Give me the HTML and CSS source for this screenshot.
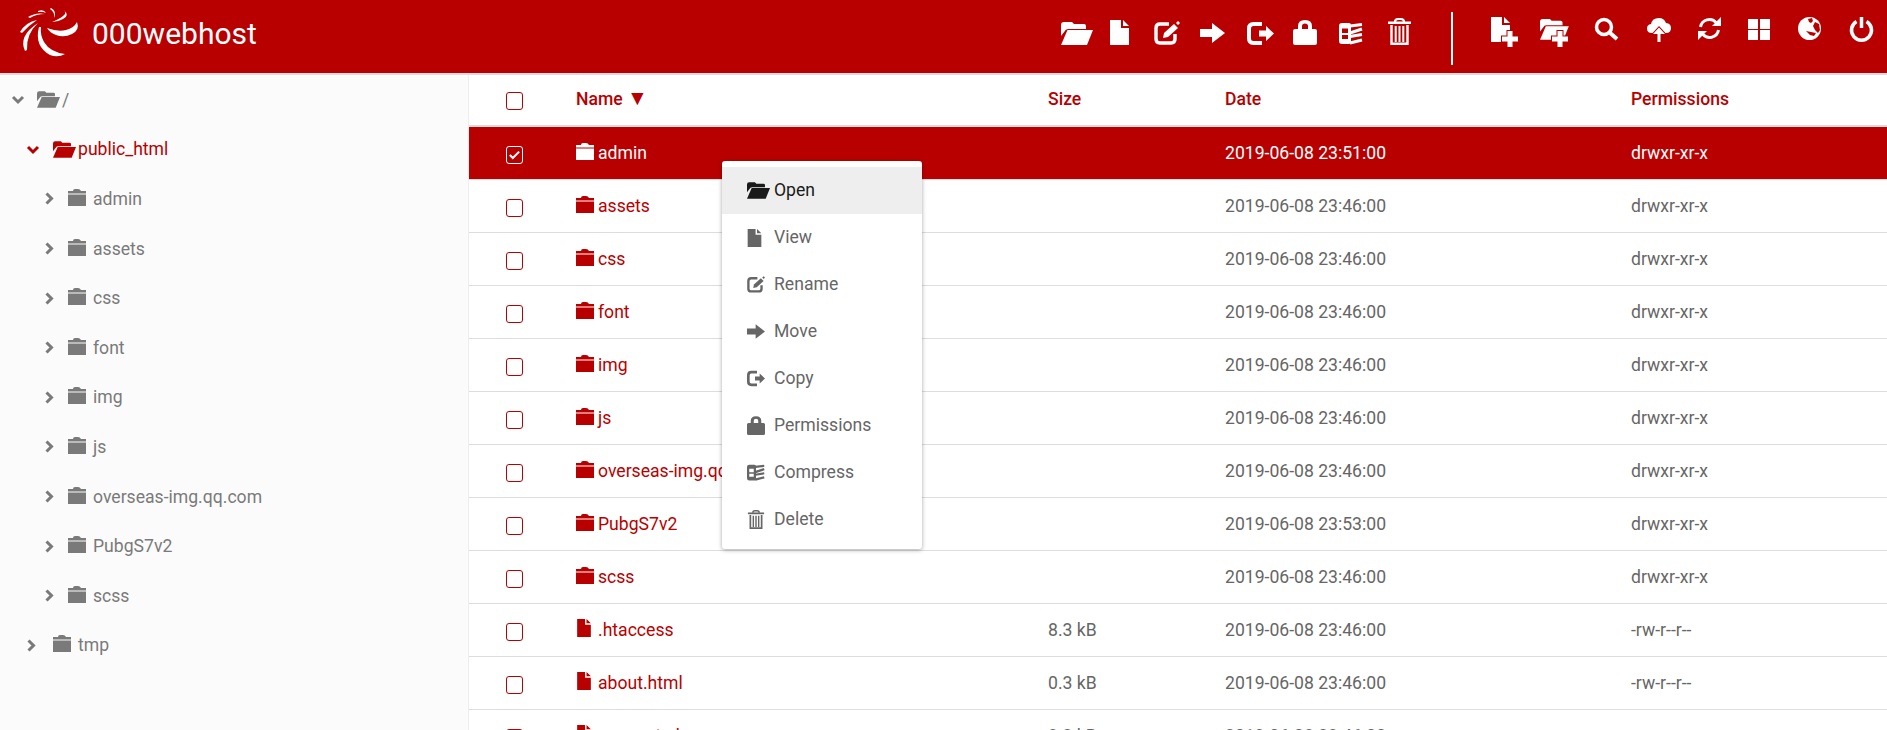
FILE: index.html
```html
<!DOCTYPE html>
<html lang="en">
<head>
<meta charset="utf-8">
<title>000webhost File Manager</title>
<link rel="stylesheet" href="styles.css">
</head>
<body>
<svg class="defs" width="0" height="0" aria-hidden="true">
  <defs>
    <g id="g-open"><path d="M0 14V3Q0 0 3 0h8l2 2h10q2 0 2 2v3H7Q4.500 7 3.500 9.500z"/><path d="M6.500 8H32L26 23H0z"/></g>
    <g id="g-file"><path d="M0 0H11V8H19V25H0z"/><path d="M13 0L19 6H13z"/></g>
    <g id="g-edit"><path class="st" stroke-width="3.400" d="M15 3H6Q2 3 2 7V18Q2 22 6 22H17Q21 22 21 18V13"/><path d="M9 17l1-5 10-9 4 4-10 9z"/><path d="M22 2l2-2 2 2-2 2z"/></g>
    <g id="g-arrow"><path d="M0 6H12V0L25 10 12 20V14H0z"/></g>
    <g id="g-copy"><path class="st" stroke-width="4" d="M15 2H6.500Q2 2 2 6.500V16.500Q2 21 6.500 21H15"/><path d="M12 8.500H19V4L27 11.500 19 19V14.500H12z"/></g>
    <g id="g-lock"><path fill-rule="evenodd" d="M2 9H5V6Q5 0 12 0 19 0 19 6V9H22Q24 9 24 11V23Q24 25 22 25H2Q0 25 0 23V11Q0 9 2 9zM9 9H15V6Q15 3.500 12 3.500 9 3.500 9 6z"/></g>
    <g id="g-zip"><path fill-rule="evenodd" d="M3 0H10Q12 0 12 2V19Q12 21 10 21H3Q0 21 0 18V3Q0 0 3 0zM3 5.500V10H9V5.500zM3 12V16H9V12z"/><path class="st" stroke-width="3" d="M11 3L23 1.500M11 10L23 6M11 13.500L23 11.500M11 20L23 17"/></g>
    <g id="g-trash"><path class="st" stroke-width="2.200" d="M7 4Q7 1 10 1H13Q16 1 16 4"/><path d="M0 3.500H23V6H0z"/><path class="st" stroke-width="2.400" d="M3.500 7V25.800H19.500V7"/><path class="st" stroke-width="2" d="M7.700 8V24M11.500 8V24M15.300 8V24"/></g>
    <g id="g-folder"><path d="M5 2Q5 0 7 0H10Q12 0 13 2H18V4.500H0V2H5z"/><path d="M0 5.500H18V17H0z"/></g>
    <g id="g-down"><path class="st" stroke-width="3" d="M1 1L6 6 11 1"/></g>
    <g id="g-right"><path class="st" stroke-width="3" d="M1.500 .5L6.500 5.500 1.500 10.500"/></g>
    <g id="g-plus"><path class="knock" d="M5.500 0h5v5.500H16v5h-5.500V16h-5v-5.500H0v-5h5.500z"/></g>
  </defs>
</svg>

<header class="topbar">
  <a class="brand">
    <svg class="brand-mark" width="58" height="50" viewBox="0 0 58 50">
      <path d="M19 19Q14 38 30 47 38 50 45 46 30 44 24 34 20 27 21 19z"/>
      <path d="M27 20Q38 24 46 22 54 20 57 14 60 22 52 26 44 30 36 27 30 25 27 20z"/>
      <path d="M5 43Q-2 28 18 15 6 26 7 42z"/>
      <path d="M0 24Q6 14 17 12 8 18 2 25z"/>
      <path d="M8 9Q16 4 25 6 16 6 10 10z"/>
      <path d="M18 3Q24 1 26 5 22 3 18 4z"/>
      <path d="M31 0Q37 3 34 10 35 4 30 1z"/>
      <path d="M44 2Q50 8 43 11 38 14 32 14 42 10 45 6 46 4 44 2z"/>
    </svg>
    <span class="brand-name">000webhost</span>
  </a>
  <nav class="tools">
    <svg width="32" height="30" viewBox="0 -5 32 30"><use href="#g-open"/></svg>
    <svg width="36" height="30" viewBox="-17 -3 36 30"><use href="#g-file"/></svg>
    <svg width="51" height="30" viewBox="-25 -4 51 30"><use href="#g-edit"/></svg>
    <svg width="45" height="30" viewBox="-20 -6 45 30"><use href="#g-arrow"/></svg>
    <svg width="49" height="30" viewBox="-22 -5 49 30"><use href="#g-copy"/></svg>
    <svg width="43" height="30" viewBox="-19 -3 43 30"><use href="#g-lock"/></svg>
    <svg width="46" height="30" viewBox="-22 -6 46 30"><use href="#g-zip"/></svg>
    <svg width="48" height="30" viewBox="-25 -1 48 30"><use href="#g-trash"/></svg>
  </nav>
  <span class="divider"></span>
  <nav class="tools">
    <svg width="27" height="30" viewBox="0 0 27 30"><use href="#g-file"/><use href="#g-plus" x="11" y="14"/></svg>
    <svg width="50" height="30" viewBox="-22 -2 50 30"><use href="#g-open" transform="scale(.9)"/><use href="#g-plus" x="12" y="12"/></svg>
    <svg width="50" height="30" viewBox="-27 -1 50 30"><circle class="st" stroke-width="3.500" cx="9" cy="9" r="7.500"/><path class="st" stroke-width="4" d="M14 14L22 21"/></svg>
    <svg width="53" height="30" viewBox="-29 -1 53 30"><path d="M5 15Q0 15 0 10.500 0 6.500 4 6 5 0 12 0 17 0 19 5 24 5.500 24 10 24 15 19 15z"/><path class="knock" stroke-width="1.500" d="M12 9.500L18 16H13.500V24H10.500V16H6z"/></svg>
    <svg width="50" height="30" viewBox="-27 0 50 30"><path class="st" stroke-width="3" d="M2.500 10A9 9 0 0 1 18 5.500"/><path d="M23 0V9H14z"/><path class="st" stroke-width="3" d="M20.500 13A9 9 0 0 1 5 17.500"/><path d="M0 23V14H9z"/></svg>
    <svg width="49" height="30" viewBox="-27 -2 49 30"><path d="M0 0H10V10H0zM12 0H22V10H12zM0 11H10V21H0zM12 11H22V21H12z"/></svg>
    <svg width="51" height="30" viewBox="-28 0 51 30"><circle cx="11.500" cy="11.500" r="11.500"/><path class="cut" d="M10 2L14 1 15 4 13 6 11 5zM17 5L21 7 22 13 20 16 17 13 15 9zM8 14L13 15 18 16 16 19 12 18z"/></svg>
    <svg width="52" height="30" viewBox="-29 0 52 30"><path class="st" stroke-width="3.500" d="M6.500 4.500A10 10 0 1 0 16.500 4.500"/><path class="st" stroke-width="3.500" d="M11.500 0V11"/></svg>
  </nav>
</header>

<div class="main">
  <aside class="tree">
    <ul class="tree-list">
      <li class="node root"><svg class="chev-d" viewBox="0 0 12 7"><use href="#g-down"/></svg><svg class="ico-open" viewBox="0 0 32 23"><use href="#g-open"/></svg><span>/</span></li>
      <li class="node lvl1 active"><svg class="chev-d" viewBox="0 0 12 7"><use href="#g-down"/></svg><svg class="ico-open" viewBox="0 0 32 23"><use href="#g-open"/></svg><span>public_html</span></li>
      <li class="node lvl2"><svg class="chev-r" viewBox="0 0 8 11"><use href="#g-right"/></svg><svg class="ico-folder" viewBox="0 0 18 17"><use href="#g-folder"/></svg><span>admin</span></li>
      <li class="node lvl2"><svg class="chev-r" viewBox="0 0 8 11"><use href="#g-right"/></svg><svg class="ico-folder" viewBox="0 0 18 17"><use href="#g-folder"/></svg><span>assets</span></li>
      <li class="node lvl2"><svg class="chev-r" viewBox="0 0 8 11"><use href="#g-right"/></svg><svg class="ico-folder" viewBox="0 0 18 17"><use href="#g-folder"/></svg><span>css</span></li>
      <li class="node lvl2"><svg class="chev-r" viewBox="0 0 8 11"><use href="#g-right"/></svg><svg class="ico-folder" viewBox="0 0 18 17"><use href="#g-folder"/></svg><span>font</span></li>
      <li class="node lvl2"><svg class="chev-r" viewBox="0 0 8 11"><use href="#g-right"/></svg><svg class="ico-folder" viewBox="0 0 18 17"><use href="#g-folder"/></svg><span>img</span></li>
      <li class="node lvl2"><svg class="chev-r" viewBox="0 0 8 11"><use href="#g-right"/></svg><svg class="ico-folder" viewBox="0 0 18 17"><use href="#g-folder"/></svg><span>js</span></li>
      <li class="node lvl2"><svg class="chev-r" viewBox="0 0 8 11"><use href="#g-right"/></svg><svg class="ico-folder" viewBox="0 0 18 17"><use href="#g-folder"/></svg><span>overseas-img.qq.com</span></li>
      <li class="node lvl2"><svg class="chev-r" viewBox="0 0 8 11"><use href="#g-right"/></svg><svg class="ico-folder" viewBox="0 0 18 17"><use href="#g-folder"/></svg><span>PubgS7v2</span></li>
      <li class="node lvl2"><svg class="chev-r" viewBox="0 0 8 11"><use href="#g-right"/></svg><svg class="ico-folder" viewBox="0 0 18 17"><use href="#g-folder"/></svg><span>scss</span></li>
      <li class="node lvl1"><svg class="chev-r" viewBox="0 0 8 11"><use href="#g-right"/></svg><svg class="ico-folder" viewBox="0 0 18 17"><use href="#g-folder"/></svg><span>tmp</span></li>
    </ul>
  </aside>

  <section class="files">
    <div class="row head">
      <div class="c-check"><span class="box"></span></div>
      <div class="c-name">Name <span class="sort">▼</span></div>
      <div class="c-size">Size</div>
      <div class="c-date">Date</div>
      <div class="c-perm">Permissions</div>
    </div>
    <div class="row selected">
      <div class="c-check"><span class="box"><svg viewBox="0 0 13 11" width="11" height="10"><path class="st" stroke-width="2.400" d="M1 5.500L4.500 9 12 1.500"/></svg></span></div>
      <div class="c-name"><svg class="ico-row" viewBox="0 0 18 17"><use href="#g-folder"/></svg>admin</div>
      <div class="c-size"></div>
      <div class="c-date">2019-06-08 23:51:00</div>
      <div class="c-perm">drwxr-xr-x</div>
    </div>
    <div class="row"><div class="c-check"><span class="box"></span></div><div class="c-name"><svg class="ico-row" viewBox="0 0 18 17"><use href="#g-folder"/></svg>assets</div><div class="c-size"></div><div class="c-date">2019-06-08 23:46:00</div><div class="c-perm">drwxr-xr-x</div></div>
    <div class="row"><div class="c-check"><span class="box"></span></div><div class="c-name"><svg class="ico-row" viewBox="0 0 18 17"><use href="#g-folder"/></svg>css</div><div class="c-size"></div><div class="c-date">2019-06-08 23:46:00</div><div class="c-perm">drwxr-xr-x</div></div>
    <div class="row"><div class="c-check"><span class="box"></span></div><div class="c-name"><svg class="ico-row" viewBox="0 0 18 17"><use href="#g-folder"/></svg>font</div><div class="c-size"></div><div class="c-date">2019-06-08 23:46:00</div><div class="c-perm">drwxr-xr-x</div></div>
    <div class="row"><div class="c-check"><span class="box"></span></div><div class="c-name"><svg class="ico-row" viewBox="0 0 18 17"><use href="#g-folder"/></svg>img</div><div class="c-size"></div><div class="c-date">2019-06-08 23:46:00</div><div class="c-perm">drwxr-xr-x</div></div>
    <div class="row"><div class="c-check"><span class="box"></span></div><div class="c-name"><svg class="ico-row" viewBox="0 0 18 17"><use href="#g-folder"/></svg>js</div><div class="c-size"></div><div class="c-date">2019-06-08 23:46:00</div><div class="c-perm">drwxr-xr-x</div></div>
    <div class="row"><div class="c-check"><span class="box"></span></div><div class="c-name"><svg class="ico-row" viewBox="0 0 18 17"><use href="#g-folder"/></svg>overseas-img.qq.com</div><div class="c-size"></div><div class="c-date">2019-06-08 23:46:00</div><div class="c-perm">drwxr-xr-x</div></div>
    <div class="row"><div class="c-check"><span class="box"></span></div><div class="c-name"><svg class="ico-row" viewBox="0 0 18 17"><use href="#g-folder"/></svg>PubgS7v2</div><div class="c-size"></div><div class="c-date">2019-06-08 23:53:00</div><div class="c-perm">drwxr-xr-x</div></div>
    <div class="row"><div class="c-check"><span class="box"></span></div><div class="c-name"><svg class="ico-row" viewBox="0 0 18 17"><use href="#g-folder"/></svg>scss</div><div class="c-size"></div><div class="c-date">2019-06-08 23:46:00</div><div class="c-perm">drwxr-xr-x</div></div>
    <div class="row"><div class="c-check"><span class="box"></span></div><div class="c-name"><svg class="ico-file" viewBox="0 0 19 25"><use href="#g-file"/></svg>.htaccess</div><div class="c-size">8.3 kB</div><div class="c-date">2019-06-08 23:46:00</div><div class="c-perm">-rw-r--r--</div></div>
    <div class="row"><div class="c-check"><span class="box"></span></div><div class="c-name"><svg class="ico-file" viewBox="0 0 19 25"><use href="#g-file"/></svg>about.html</div><div class="c-size">0.3 kB</div><div class="c-date">2019-06-08 23:46:00</div><div class="c-perm">-rw-r--r--</div></div>
    <div class="row"><div class="c-check"><span class="box"></span></div><div class="c-name"><svg class="ico-file" viewBox="0 0 19 25"><use href="#g-file"/></svg>account.php</div><div class="c-size">3.2 kB</div><div class="c-date">2019-06-08 23:46:00</div><div class="c-perm">-rw-r--r--</div></div>
  </section>
</div>

<ul class="menu">
  <li class="menu-item hover"><svg class="m-open" viewBox="0 0 32 23"><use href="#g-open"/></svg>Open</li>
  <li class="menu-item"><svg class="m-file" viewBox="0 0 19 25"><use href="#g-file"/></svg>View</li>
  <li class="menu-item"><svg class="m-icon" viewBox="0 0 26 24"><use href="#g-edit"/></svg>Rename</li>
  <li class="menu-item"><svg class="m-icon" viewBox="0 0 25 20"><use href="#g-arrow"/></svg>Move</li>
  <li class="menu-item"><svg class="m-icon" viewBox="0 0 27 23"><use href="#g-copy"/></svg>Copy</li>
  <li class="menu-item"><svg class="m-icon" viewBox="0 0 24 25"><use href="#g-lock"/></svg>Permissions</li>
  <li class="menu-item"><svg class="m-icon" viewBox="0 0 24 21"><use href="#g-zip"/></svg>Compress</li>
  <li class="menu-item"><svg class="m-icon" viewBox="0 0 23 27"><use href="#g-trash"/></svg>Delete</li>
</ul>
</body>
</html>
```
FILE: styles.css
```css
* { box-sizing: border-box; }
html, body { height: 100%; }
body {
  margin: 0;
  overflow: hidden;
  background: #fff;
  color: #666;
  font: 17.6px/24px Roboto, "Liberation Sans", sans-serif;
  fill: currentColor;
}
ul { list-style: none; margin: 0; padding: 0; }
svg { display: block; flex: none; overflow: visible; }
.defs { position: absolute; }
.st { fill: none; stroke: currentColor; stroke-linejoin: miter; }
.knock { fill: #fff; stroke: #b80000; stroke-width: 2; paint-order: stroke; }
.cut { fill: #b80000; }

.topbar {
  display: flex;
  align-items: flex-start;
  height: 75px;
  padding: 17px 14px 0 20px;
  background: #b80000;
  border-bottom: 2px solid #ddd;
  color: #fff;
  fill: #fff;
}
.brand { display: flex; align-items: center; margin: -9px auto 0 0; }
.brand-mark { fill: #fff; }
.brand-name { margin: 1px 0 0 14px; font: 400 30px/40px Roboto, sans-serif; }
.tools { display: flex; }
.divider { width: 2px; height: 53px; margin: -5px 38px 0 40px; background: #fff; }

.main { display: flex; height: calc(100% - 75px); }
.tree { flex: none; width: 469px; background: #fbfbfb; border-right: 1px solid #eee; color: #7a7a7a; }
.node { display: flex; align-items: center; height: 49.600px; white-space: nowrap; }
.root { padding-left: 12px; }
.lvl1 { padding-left: 27px; }
.lvl2 { padding-left: 45px; }
.active { color: #b80000; }
.chev-d { width: 12px; height: 7px; margin-right: 13px; }
.chev-r { width: 8px; height: 11px; margin-right: 15px; }
.lvl1.active .chev-d { margin-right: 14px; }
.lvl1 .chev-r { margin-right: 18px; }
.ico-open { width: 23px; height: 17px; margin-right: 2px; }
.ico-folder { width: 18px; height: 17px; margin-right: 7px; margin-top: -3px; }

.files { flex: 1; min-width: 0; }
.row {
  display: grid;
  grid-template-columns: 107px 472px 177px 406px 1fr;
  align-items: center;
  height: 53px;
  border-bottom: 1px solid #ddd;
  color: #666;
}
.row.head { height: 52px; padding-bottom: 2px; border-bottom-width: 2px; color: #b80000; font-weight: 500; }
.row.selected { background: #b80000; color: #fff; fill: #fff; }
.c-check { padding: 4px 0 0 37px; }
.head .c-check { padding-top: 4px; }
.box {
  display: flex;
  align-items: center;
  justify-content: center;
  width: 17px;
  height: 18px;
  border: 1px solid #b80000;
  border-radius: 3px;
  background: #fff;
}
.selected .box { background: transparent; border-color: #fff; }
.selected .box svg { color: #fff; }
.c-name { display: flex; align-items: center; color: #b80000; white-space: nowrap; }
.head .c-name { display: block; }
.selected .c-name { color: #fff; }
.sort { font-size: 21px; line-height: 0; }
.ico-row { width: 18px; height: 17px; margin: -3px 4px 0 0; }
.ico-file { width: 14px; height: 18px; margin: -5px 7px 0 1px; }

.menu {
  position: absolute;
  left: 722px;
  top: 161px;
  width: 200px;
  padding: 6px 0;
  background: #fff;
  border-radius: 3px;
  box-shadow: 0 1px 4px rgba(0,0,0,.35);
}
.menu-item {
  display: flex;
  align-items: center;
  height: 47px;
  padding: 0 0 2px 25px;
  color: #666;
}
.menu-item.hover { background: #eee; color: #1a1a1a; }
.m-open { width: 23px; height: 17px; margin: 2px 4px 0 0; }
.m-file { width: 15px; height: 18px; margin: 2px 12px 0 0; }
.m-icon { width: 18px; height: 19px; margin: 2px 9px 0 0; }
```
